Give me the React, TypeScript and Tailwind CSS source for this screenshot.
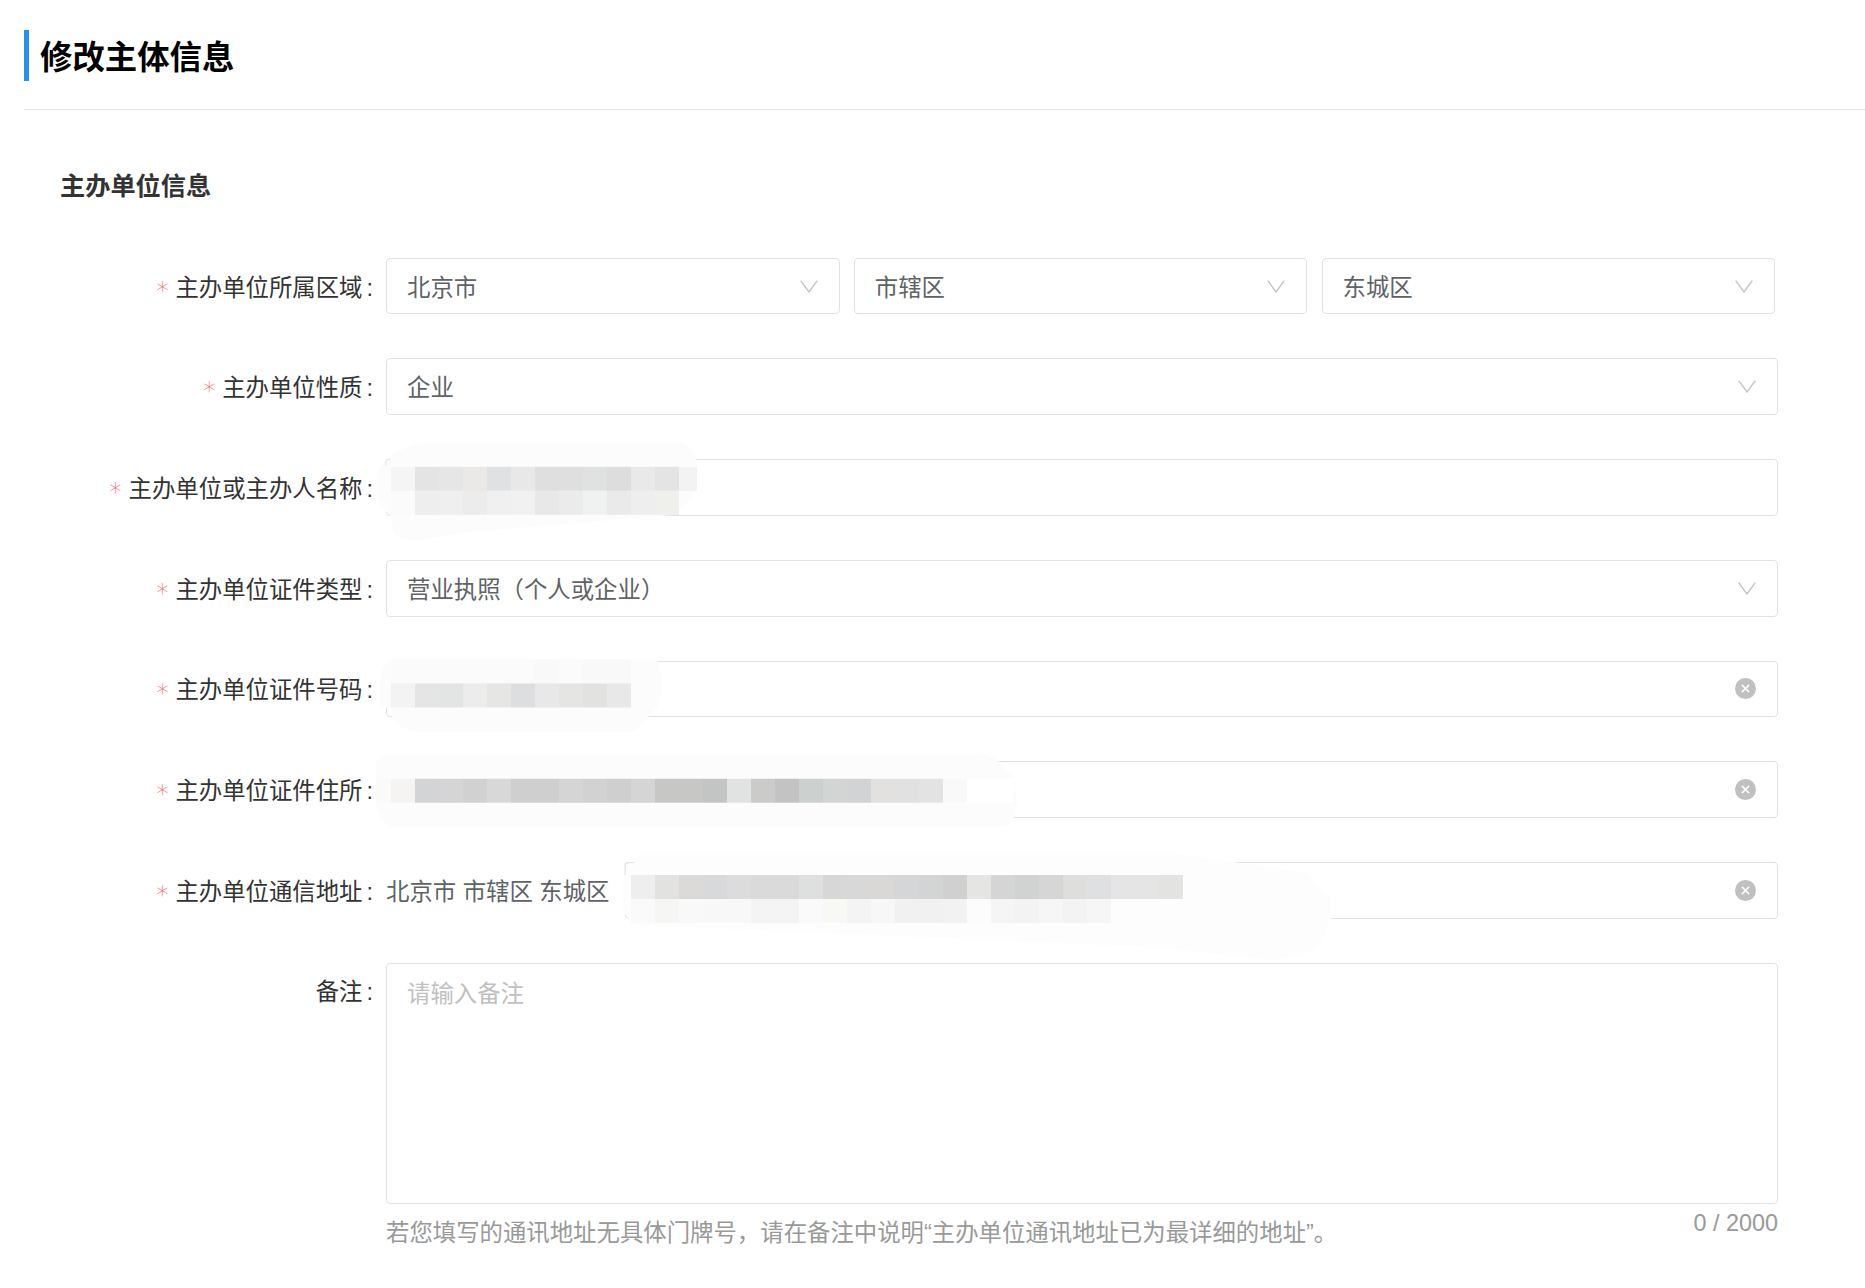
import React from "react";

const FONT = "[font-family:'Liberation_Sans','Noto_Sans_CJK_SC',sans-serif]";

function Chevron() {
  return (
    <svg width="18" height="13" viewBox="0 0 18 13" fill="none" className="shrink-0">
      <path d="M0.7 0.7 L9 12 L17.3 0.7" stroke="#c4c4c4" strokeWidth="1.4" />
    </svg>
  );
}

function Clear() {
  return (
    <svg width="21" height="21" viewBox="0 0 21 21" className="shrink-0">
      <circle cx="10.5" cy="10.5" r="10.5" fill="#c0c0c0" />
      <path d="M6.9 6.9 L14.1 14.1 M14.1 6.9 L6.9 14.1" stroke="#fff" strokeWidth="1.5" />
    </svg>
  );
}

function Label({ children, required = true }: { children: React.ReactNode; required?: boolean }) {
  return (
    <div className="w-[386px] shrink-0 pr-[13px] pt-[4px] flex justify-end items-center h-[56.7px] text-[23.4px] text-[#333333]">
      {required && <span className="[font-family:'DejaVu_Sans',sans-serif] text-[24px] font-light text-[#f56c6c] mr-[7px] mt-[5px] leading-none">*</span>}
      <span>{children}</span>
      <span className="ml-[4px]">:</span>
    </div>
  );
}

function Box({ children, className = "" }: { children?: React.ReactNode; className?: string }) {
  return (
    <div
      className={
        "relative h-[56.7px] flex items-center justify-between pl-[20px] pr-[21px] bg-white border border-[#e2e2e2] rounded-[4px] text-[23.4px] text-[#606266] " +
        className
      }
    >
      {children}
    </div>
  );
}

function Value({ children }: { children?: React.ReactNode }) {
  return <span className="pt-[4px]">{children}</span>;
}

function Cells({ x, y, colors }: { x: number; y: number; colors: string[] }) {
  return (
    <>
      {colors.map((c, i) => (
        <rect key={i} x={x + i * 24} y={y} width="24" height="24" fill={c} />
      ))}
    </>
  );
}

function Mosaic({ ox, oy, children }: { ox: number; oy: number; children: React.ReactNode }) {
  return (
    <svg className="absolute -left-px -top-px w-full h-full overflow-visible pointer-events-none" aria-hidden="true">
      <g transform={`translate(${-ox} ${-oy})`}>{children}</g>
    </svg>
  );
}

export default function App() {
  return (
    <div className={"w-full min-h-[1288px] bg-white pb-[20px] overflow-hidden " + FONT}>
      <div className="ml-[24px] h-[110px] pt-[30px] border-b border-[#e6e6e6]">
        <div className="h-[51px] border-l-[5px] border-[#2b8fe6] pl-[11px] pt-[6px] flex items-center text-[32.4px] font-bold text-black">
          修改主体信息
        </div>
      </div>

      <div className="pl-[60px] mt-[58px] mb-[55.75px] h-[34px] pt-[4px] flex items-center text-[25.2px] font-bold text-[#333333]">
        主办单位信息
      </div>

      <div className="flex flex-col gap-[44px] pr-[87px]">
        <div className="flex">
          <Label>主办单位所属区域</Label>
          <div className="flex gap-[14.2px]">
            {["北京市", "市辖区", "东城区"].map((t) => (
              <Box key={t} className="w-[453.6px]">
                <Value>{t}</Value>
                <Chevron />
              </Box>
            ))}
          </div>
        </div>

        <div className="flex">
          <Label>主办单位性质</Label>
          <Box className="flex-1">
            <Value>企业</Value>
            <Chevron />
          </Box>
        </div>

        <div className="flex">
          <Label>主办单位或主办人名称</Label>
          <Box className="flex-1">
            <Mosaic ox={386} oy={459.15}>
              <path
                d="M377 478 Q380 455 407 448 Q415 443 427 443 L677 442 Q692 444 695 455 Q699 465 697 478 Q696 490 690 498 Q684 510 675 515 L470 532 Q440 536 417 541 Q398 540 393 532 L390 515 Q382 510 378 498 Z"
                fill="#fcfcfc"
              />
              <path d="M386 466 L386 461 Q386 459.5 388 459.5 L391 459.5" fill="none" stroke="#e2e2e2" />
              <Cells
                x={391}
                y={467}
                colors={["#f5f5f5", "#e4e4e4", "#e6e6e6", "#ebe9e7", "#e0e1e3", "#e8e8e8", "#dfdfdf", "#dfdfdf", "#e0e2e1", "#dddddd", "#e9e9e9", "#e4e4e4"]}
              />
              <rect x="679" y="467" width="18" height="24" fill="#f2f3f2" />
              <Cells
                x={391}
                y={491}
                colors={["#fbfbfb", "#eeeeee", "#efefef", "#ececec", "#f0f0f0", "#f1f1f1", "#e8e8e8", "#ebebeb", "#f0f2f1", "#eaeaea", "#eeeeee", "#efefec"]}
              />
            </Mosaic>
          </Box>
        </div>

        <div className="flex">
          <Label>主办单位证件类型</Label>
          <Box className="flex-1">
            <Value>营业执照（个人或企业）</Value>
            <Chevron />
          </Box>
        </div>

        <div className="flex">
          <Label>主办单位证件号码</Label>
          <Box className="flex-1">
            <span />
            <Mosaic ox={386} oy={660.55}>
              <path
                d="M380 683 Q381 668 385 663 Q387 659 392 659 L657 659 Q660 670 662 682 Q662 695 657 707 L647 718 Q640 728 633 731 L413 731 Q398 728 392 717 L392 707 L380 707 Z"
                fill="#fcfcfc"
              />
              <Cells
                x={391}
                y={659}
                colors={["#fbfbfb", "#fbfbfb", "#fbfbfb", "#fbfbfb", "#fbfbfb", "#fbfbfb", "#f9f9f9", "#fbfbfb", "#f9f9f9", "#f9f9f9"]}
              />
              <Cells
                x={391}
                y={683}
                colors={["#f3f3f3", "#e5e5e5", "#e3e5e4", "#ececec", "#e6e6e4", "#dddee0", "#e8e8e8", "#e5e5e3", "#e2e2e0", "#e8e8e8"]}
              />
            </Mosaic>
            <Clear />
          </Box>
        </div>

        <div className="flex">
          <Label>主办单位证件住所</Label>
          <Box className="flex-1">
            <span />
            <Mosaic ox={386} oy={761.25}>
              <path
                d="M376 780 L376 763 Q380 755 391 755 L980 754 Q990 755 997 760 L1014 778 L1017 803 L1014 818 Q1010 826 1001 827 L391 827 Q378 820 376 803 Z"
                fill="#fcfcfc"
              />
              <rect x="376" y="779" width="15" height="24" fill="#fafafa" />
              <Cells
                x={391}
                y={779}
                colors={["#f5f4f2", "#d3d4d6", "#d5d5d5", "#d1d1d1", "#d8d8d8", "#cfcfcf", "#cfcfcf", "#d5d5d5", "#d2d2d2", "#cfcfcf", "#d5d5d5", "#c7c7c5", "#c7c7c5", "#c3c5c4", "#e1e3e2", "#cbcbc9", "#c3c3c3", "#ccd0cf", "#d3d4d4", "#d2d3d5", "#e2e1df", "#e0e1e0", "#e3e3e3", "#f8f9f8"]}
              />
              <rect x="967" y="779" width="47" height="24" fill="#ffffff" />
            </Mosaic>
            <Clear />
          </Box>
        </div>

        <div className="flex">
          <Label>主办单位通信地址</Label>
          <div className="w-[239px] shrink-0 flex items-center pt-[4px] text-[23.4px] text-[#606266] whitespace-nowrap">北京市 市辖区 东城区</div>
          <Box className="flex-1">
            <span />
            <Mosaic ox={625} oy={861.95}>
              <path
                d="M622 900 Q622 870 630 864 Q636 852 648 852 L1157 851 L1233 862 L1308 873 L1331 899 L1331 919 L1318 948 Q1300 958 1271 960 L1153 947 L640 925 Q622 920 622 900 Z"
                fill="#fdfdfd"
              />
              <path d="M625 875 L625 864 Q625 862.5 627 862.5 L634 862.5" fill="none" stroke="#e2e2e2" />
              <Cells
                x={631}
                y={875}
                colors={["#eeeeee", "#e2e2e0", "#dbdad8", "#d8d9db", "#dcdcdc", "#dadada", "#dadada", "#dee0df", "#d7d7d7", "#d8d8d8", "#d9d8d6", "#d5d6d8", "#d3d5d4", "#d0d0d0", "#e5e5e3", "#d5d5d5", "#d1d3d2", "#d6d6d6", "#dededc", "#dfe0e2", "#e5e5e5", "#e5e5e5", "#e3e3e1"]}
              />
              <Cells
                x={631}
                y={899}
                colors={["#fafafa", "#f6f6f4", "#f9f9f9", "#f8f8f8", "#f8f8f8", "#f4f4f4", "#f4f4f4", "#fafafa", "#f8f8f5", "#f4f4f4", "#f7f7f7", "#f1f1f1", "#f1f1f1", "#f2f2f2", "#fbfcfb", "#f5f5f5", "#f3f3f3", "#f6f6f6", "#f3f3f3", "#f6f6f6"]}
              />
            </Mosaic>
            <Clear />
          </Box>
        </div>

        <div className="flex">
          <Label required={false}>备注</Label>
          <div className="flex-1 flex flex-col">
            <div className="h-[241px] bg-white border border-[#e2e2e2] rounded-[4px] pl-[20px] pt-[11px] text-[23.4px] leading-[38px] text-[#c0c0c0]">
              请输入备注
            </div>
            <div className="flex justify-between items-start text-[23.4px] text-[#999999]">
              <div className="mt-[15px] leading-[28px] whitespace-nowrap">若您填写的通讯地址无具体门牌号，请在备注中说明“主办单位通讯地址已为最详细的地址”。</div>
              <div className="mt-[5px] leading-[28px] whitespace-nowrap">0 / 2000</div>
            </div>
          </div>
        </div>
      </div>
    </div>
  );
}
